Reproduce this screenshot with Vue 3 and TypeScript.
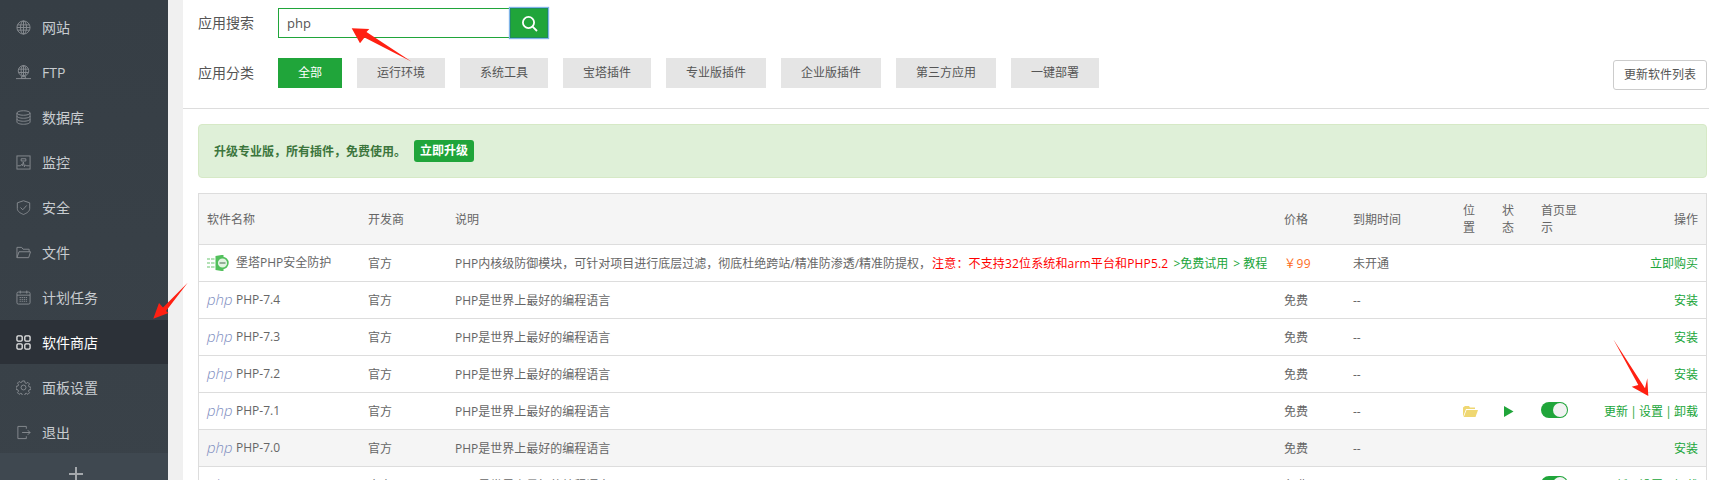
<script setup lang="ts">
interface NavItem { label: string; icon: string; active?: boolean }
interface Row { name: string; hover?: boolean; installed?: boolean }

const navItems: NavItem[] = [
  { label: '网站', icon: 'globe' },
  { label: 'FTP', icon: 'ftp' },
  { label: '数据库', icon: 'db' },
  { label: '监控', icon: 'monitor' },
  { label: '安全', icon: 'shield' },
  { label: '文件', icon: 'folder' },
  { label: '计划任务', icon: 'calendar' },
  { label: '软件商店', icon: 'apps', active: true },
  { label: '面板设置', icon: 'gear' },
  { label: '退出', icon: 'exit' },
]
const categories: string[] = ['全部', '运行环境', '系统工具', '宝塔插件', '专业版插件', '企业版插件', '第三方应用', '一键部署']
const rows: Row[] = [
  { name: 'PHP-7.4' },
  { name: 'PHP-7.3' },
  { name: 'PHP-7.2' },
  { name: 'PHP-7.1', installed: true },
  { name: 'PHP-7.0', hover: true },
  { name: 'PHP-5.6', installed: true },
]
const colWidths: number[] = [161, 87, 829, 69, 110, 39, 39, 60, 113]
</script>

<template>
  <div class="page">
    <aside class="sidebar">
      <ul class="nav">
        <li v-for="item in navItems" :key="item.label" class="nav-item" :class="{ active: item.active }">
          <svg class="nav-icon" viewBox="0 0 16 16" fill="none" stroke="currentColor" stroke-width="1">
            <template v-if="item.icon === 'globe'">
              <circle cx="8" cy="8" r="7" />
              <ellipse cx="8" cy="8" rx="3.2" ry="7" />
              <path d="M8 1v14M1.8 5.2h12.4M1.8 10.8h12.4M1 8h14" />
            </template>
            <template v-else-if="item.icon === 'ftp'">
              <circle cx="8" cy="6.2" r="5.6" />
              <ellipse cx="8" cy="6.2" rx="2.5" ry="5.6" />
              <path d="M2.8 4.4h10.4M2.8 8h10.4M8 .6v11.2M6 12h4v2.2H6zM0 14.5h16" />
            </template>
            <template v-else-if="item.icon === 'db'">
              <ellipse cx="8" cy="3.2" rx="7" ry="2.4" />
              <path d="M1 3.2v9.6c0 1.3 3.1 2.4 7 2.4s7-1.1 7-2.4V3.2M1 6.4c0 1.3 3.1 2.4 7 2.4s7-1.1 7-2.4M1 9.6c0 1.3 3.1 2.4 7 2.4s7-1.1 7-2.4" />
            </template>
            <template v-else-if="item.icon === 'monitor'">
              <rect x="1" y="1" width="14" height="14" />
              <path d="M1.5 11.5h3.2l1.2-1.5.9 1.5 1-4 1.2 5 1-2 1 1h3.5M5.5 4h5v2.4h-5z" />
            </template>
            <template v-else-if="item.icon === 'shield'">
              <path d="M8 .8l6.6 2.2v6.2c0 3-3.4 5-6.6 6.2-3.2-1.2-6.6-3.2-6.6-6.2V3z" />
              <path d="M4.8 8l2.4 2.4L11.4 5.8" />
            </template>
            <template v-else-if="item.icon === 'folder'">
              <path d="M1 13.5V2.5h5l1.5 2h6.5v2.7M1 13.5l2.2-6.3h12.3l-2 6.3z" />
            </template>
            <template v-else-if="item.icon === 'calendar'">
              <rect x="1" y="2.2" width="14" height="12.8" rx="1.5" />
              <path d="M4.5 .6v3.2M11.5 .6v3.2M1 5.5h14" />
              <path d="M3.8 8h8.6M3.8 10h8.6M3.8 12h8.6" stroke-dasharray="1.4 0.8" />
            </template>
            <template v-else-if="item.icon === 'apps'">
              <rect x="1" y="1" width="5.6" height="5.6" rx="1.2" stroke-width="1.4" />
              <rect x="9.4" y="1" width="5.6" height="5.6" rx="1.2" stroke-width="1.4" />
              <rect x="1" y="9.4" width="5.6" height="5.6" rx="1.2" stroke-width="1.4" />
              <rect x="9.4" y="9.4" width="5.6" height="5.6" rx="1.2" stroke-width="1.4" />
            </template>
            <template v-else-if="item.icon === 'gear'">
              <circle cx="8" cy="8" r="2.6" />
              <path d="M6.8 1h2.4l.4 2 1.4.6 1.7-1.1 1.7 1.7-1.1 1.7.6 1.4 2 .4v2.4l-2 .4-.6 1.4 1.1 1.7-1.7 1.7-1.7-1.1-1.4.6-.4 2H6.8l-.4-2-1.4-.6-1.7 1.1-1.7-1.7 1.1-1.7-.6-1.4-2-.4V6.8l2-.4.6-1.4-1.1-1.7 1.7-1.7L5 2.7l1.4-.6z" />
            </template>
            <template v-else>
              <path d="M11 4V1.5H2v13h9V12M6.5 8h8.5M12.5 5.5L15 8l-2.5 2.5" />
            </template>
          </svg>
          <span>{{ item.label }}</span>
        </li>
      </ul>
      <div class="add"><i class="plus-h"></i><i class="plus-v"></i></div>
    </aside>

    <main class="main">
      <section class="toolbar">
        <div class="search-row">
          <span class="label">应用搜索</span>
          <div class="search-input"><span>php</span></div>
          <div class="search-btn">
            <svg width="17" height="17" viewBox="0 0 17 17" fill="none" stroke="#fff" stroke-width="1.8">
              <circle cx="7.5" cy="7.5" r="5.6" />
              <path d="M11.6 11.6L16 16" />
            </svg>
          </div>
        </div>
        <div class="cat-row">
          <span class="label">应用分类</span>
          <div class="cats">
            <span v-for="(c, i) in categories" :key="c" class="cat" :class="{ on: i === 0 }">{{ c }}</span>
          </div>
          <span class="refresh">更新软件列表</span>
        </div>
      </section>

      <section class="body">
        <div class="alert">
          <b>升级专业版，所有插件，免费使用。</b>
          <span class="upgrade">立即升级</span>
        </div>

        <table class="grid">
          <colgroup>
            <col v-for="(w, i) in colWidths" :key="i" :style="{ width: w + 'px' }" />
          </colgroup>
          <thead>
            <tr>
              <th>软件名称</th>
              <th>开发商</th>
              <th>说明</th>
              <th>价格</th>
              <th>到期时间</th>
              <th>位置</th>
              <th>状态</th>
              <th>首页显示</th>
              <th class="right">操作</th>
            </tr>
          </thead>
          <tbody>
            <tr>
              <td>
                <span class="name">
                  <svg class="bt-logo" width="22" height="16" viewBox="0 0 22 16">
                    <g fill="#b4e2b7">
                      <rect x="0" y="3" width="3" height="2" />
                      <rect x="0" y="7" width="3" height="2" />
                      <rect x="0" y="11" width="3" height="2" />
                      <rect x="4" y="3" width="3.5" height="2" />
                      <rect x="4" y="7" width="3.5" height="2" />
                      <rect x="4" y="11" width="3.5" height="2" />
                    </g>
                    <path d="M8.5 1l6-1h2v16h-2l-6-1z" fill="#52c05c" />
                    <circle cx="15.5" cy="8" r="5.4" fill="#e2f3e2" stroke="#52c05c" stroke-width="1.6" />
                    <rect x="12.5" y="7" width="6" height="2" fill="#93b098" />
                  </svg>
                  <span>堡塔PHP安全防护</span>
                </span>
              </td>
              <td>官方</td>
              <td class="nowrap">PHP内核级防御模块，可针对项目进行底层过滤，彻底杜绝跨站/精准防渗透/精准防提权，<span class="red">注意：不支持32位系统和arm平台和PHP5.2</span><span class="green trial"> &gt;免费试用</span><span class="green tutorial"> &gt; 教程</span></td>
              <td class="orange">￥99</td>
              <td>未开通</td>
              <td></td>
              <td></td>
              <td></td>
              <td class="right green">立即购买</td>
            </tr>
            <tr v-for="r in rows" :key="r.name" :class="{ hover: r.hover }">
              <td>
                <span class="name">
                  <span class="php-logo">php</span>
                  <span>{{ r.name }}</span>
                </span>
              </td>
              <td>官方</td>
              <td>PHP是世界上最好的编程语言</td>
              <td>免费</td>
              <td>--</td>
              <td>
                <svg v-if="r.installed" class="folder" width="15" height="11" viewBox="0 0 15 11">
                  <path d="M2 0h4l1 1.5h5V3H3L0 11V1.5z" fill="#efd772" />
                  <path d="M3.5 4H15l-2.5 7H0.8z" fill="#efd772" />
                </svg>
              </td>
              <td>
                <svg v-if="r.installed" class="play" width="10" height="11" viewBox="0 0 10 11">
                  <path d="M0 0l9.5 5.5L0 11z" fill="#20a53a" />
                </svg>
              </td>
              <td><span v-if="r.installed" class="toggle"></span></td>
              <td class="right green">
                <template v-if="r.installed">更新<span class="sep">|</span>设置<span class="sep">|</span>卸载</template>
                <template v-else>安装</template>
              </td>
            </tr>
          </tbody>
        </table>
      </section>
    </main>

    <svg class="arrows" width="1709" height="480" viewBox="0 0 1709 480">
      <polygon fill="#ff2012" points="351.7,28.3 369.3,29 366.5,32 411.7,61.7 364.5,37.5 360,43.3" />
      <polygon fill="#ff2012" points="153.3,318.7 159,303 163,307.5 187.7,282.7 166,311 168.5,313" />
      <polygon fill="#ff2012" points="1613.3,339.3 1645,388.3 1647.3,378.3 1648.3,396 1631.7,386.7 1638.3,385" />
    </svg>
  </div>
</template>

<style>
html, body { margin: 0; background: #f0f0f0; overflow: hidden; }
</style>

<style scoped>
.page {
  position: relative;
  display: flex;
  width: 1709px;
  height: 480px;
  overflow: hidden;
  background: #f0f0f0;
  font-family: "Open Sans", "Noto Sans CJK SC", "Noto Sans", sans-serif;
  font-size: 12px;
  line-height: 17px;
  color: #666;
}
.sidebar {
  position: relative;
  width: 168px;
  flex: none;
  background: linear-gradient(#363e45, #3a4249);
}
.nav {
  list-style: none;
  margin: 0;
  padding: 5px 0 0;
}
.nav-item {
  display: flex;
  align-items: center;
  height: 45px;
  padding-left: 16px;
  gap: 11px;
  font-size: 14px;
  color: #c8ccd0;
}
.nav-item .nav-icon { width: 15px; height: 15px; color: #878c91; flex: none; }
.nav-item.active { background: #2c3138; color: #fff; height: 44px; margin-bottom: 1px; }
.nav-item.active .nav-icon { color: #e8e8e8; }
.add {
  position: absolute;
  left: 0;
  right: 0;
  bottom: 0;
  height: 27px;
  background: #3f4850;
  overflow: hidden;
}
.plus-h, .plus-v { position: absolute; background: #a4a8ac; }
.plus-h { left: 69px; top: 20px; width: 14px; height: 2px; }
.plus-v { left: 75px; top: 14px; width: 2px; height: 14px; }
.main {
  flex: 1;
  margin-left: 15px;
  background: #fff;
  min-width: 0;
}
.toolbar {
  padding: 8px 2px 18px 15px;
  border-bottom: 1px solid #ddd;
}
.search-row { display: flex; align-items: center; height: 30px; }
.label { width: 80px; flex: none; font-size: 14px; color: #555; line-height: 30px; }
.search-input {
  box-sizing: border-box;
  width: 232px;
  height: 30px;
  border: 1px solid #20a53a;
  padding-left: 8px;
  font-size: 13px;
  line-height: 28px;
  color: #555;
}
.search-btn {
  box-sizing: border-box;
  width: 38px;
  height: 30px;
  background: #20a53a;
  border: 1px solid #1d8e5a;
  box-shadow: 0 0 1px 1px #7fb4e8;
  display: flex;
  align-items: center;
  justify-content: center;
}
.cat-row { display: flex; margin-top: 20px; align-items: flex-start; }
.cats { display: flex; gap: 15px; flex: 1; }
.cat {
  padding: 0 20px;
  height: 30px;
  line-height: 30px;
  background: #e5e5e5;
  color: #555;
}
.cat.on { background: #20a53a; color: #fff; }
.refresh {
  box-sizing: border-box;
  margin-top: 2px;
  width: 94px;
  height: 30px;
  border: 1px solid #ccc;
  border-radius: 3px;
  line-height: 28px;
  text-align: center;
  color: #555;
}
.body { padding: 15px 2px 0 15px; }
.alert {
  box-sizing: border-box;
  height: 54px;
  display: flex;
  align-items: center;
  padding-left: 15px;
  background: #dff0d8;
  border: 1px solid #d6e9c6;
  border-radius: 4px;
  color: #3c763d;
}
.upgrade {
  margin-left: 8px;
  padding: 0 6px;
  height: 22px;
  line-height: 22px;
  background: #20a53a;
  color: #fff;
  border-radius: 3px;
  font-weight: 600;
}
.grid {
  box-sizing: border-box;
  margin-top: 15px;
  width: 1509px;
  table-layout: fixed;
  border-collapse: separate;
  border-spacing: 0;
  border: 1px solid #ddd;
  border-bottom: 0;
}
.grid th {
  box-sizing: border-box;
  padding: 8px;
  background: #f5f5f5;
  font-weight: 400;
  text-align: left;
  border-bottom: 1px solid #ddd;
  color: #666;
}
.grid td {
  box-sizing: border-box;
  height: 37px;
  padding: 0 8px;
  border-bottom: 1px solid #ddd;
  vertical-align: middle;
}
.grid .right { text-align: right; }
.grid td.green, .green { color: #20a53a; }
.red { color: #ff0000; margin-left: 1px; letter-spacing: 0.15px; }
.trial { margin-left: 2px; }
.tutorial { margin-left: 2px; }
.orange { color: #fc6d26; letter-spacing: 0.5px; }
.nowrap { white-space: nowrap; overflow: visible; }
.hover td { background: #f5f5f5; }
.name { display: flex; align-items: center; gap: 5px; white-space: nowrap; margin-top: -1px; }
.bt-logo { flex: none; width: 22px; margin: 0 2px 0 0; }
.php-logo {
  width: 24px;
  flex: none;
  font-family: "Open Sans", sans-serif;
  font-style: italic;
  font-weight: 300;
  font-size: 15px;
  line-height: 17px;
  color: #7e8dbf;
}
.folder, .play { display: block; }
.play { margin-left: 2px; }
.sep { display: inline-block; width: 11px; text-align: center; }
.toggle {
  display: block;
  position: relative;
  width: 27px;
  height: 16px;
  margin-top: -2px;
  border-radius: 8px;
  background: #20a53a;
}
.toggle::after {
  content: "";
  position: absolute;
  right: 1px;
  top: 1px;
  width: 14px;
  height: 14px;
  border-radius: 50%;
  background: #f2f2f2;
}
.arrows {
  position: absolute;
  left: 0;
  top: 0;
  pointer-events: none;
}
</style>
